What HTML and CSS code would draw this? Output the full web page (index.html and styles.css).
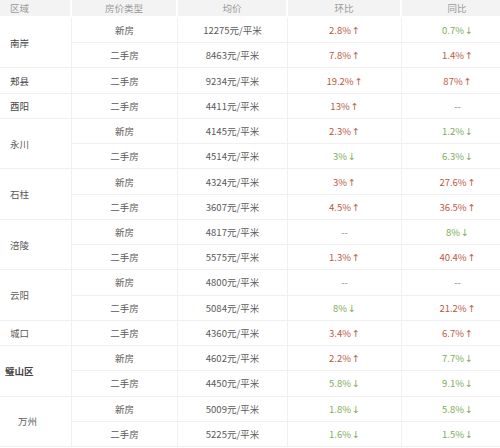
FILE: index.html
```html
<!DOCTYPE html>
<html lang="zh">
<head>
<meta charset="utf-8">
<link rel="stylesheet" href="styles.css">
</head>
<body>
<div class="wrap">
<table class="t">
<colgroup><col class="c1"><col class="c2"><col class="c3"><col class="c4"><col class="c5"></colgroup>
<thead>
<tr><th class="area">区域</th><th>房价类型</th><th>均价</th><th>环比</th><th>同比</th></tr>
</thead>
<tbody>
<tr><td rowspan="2" class="area b">南岸</td><td>新房</td><td>12275元/平米</td><td class="up">2.8%<span class="ar">↑</span></td><td class="dn">0.7%<span class="ar">↓</span></td></tr>
<tr><td>二手房</td><td>8463元/平米</td><td class="up">7.8%<span class="ar">↑</span></td><td class="up">1.4%<span class="ar">↑</span></td></tr>
<tr><td class="area b">郏县</td><td>二手房</td><td>9234元/平米</td><td class="up">19.2%<span class="ar">↑</span></td><td class="up">87%<span class="ar">↑</span></td></tr>
<tr><td class="area b">酉阳</td><td>二手房</td><td>4411元/平米</td><td class="up">13%<span class="ar">↑</span></td><td class="na">--</td></tr>
<tr><td rowspan="2" class="area">永川</td><td>新房</td><td>4145元/平米</td><td class="up">2.3%<span class="ar">↑</span></td><td class="dn">1.2%<span class="ar">↓</span></td></tr>
<tr><td>二手房</td><td>4514元/平米</td><td class="dn">3%<span class="ar">↓</span></td><td class="dn">6.3%<span class="ar">↓</span></td></tr>
<tr><td rowspan="2" class="area">石柱</td><td>新房</td><td>4324元/平米</td><td class="up">3%<span class="ar">↑</span></td><td class="up">27.6%<span class="ar">↑</span></td></tr>
<tr><td>二手房</td><td>3607元/平米</td><td class="up">4.5%<span class="ar">↑</span></td><td class="up">36.5%<span class="ar">↑</span></td></tr>
<tr><td rowspan="2" class="area">涪陵</td><td>新房</td><td>4817元/平米</td><td class="na">--</td><td class="dn">8%<span class="ar">↓</span></td></tr>
<tr><td>二手房</td><td>5575元/平米</td><td class="up">1.3%<span class="ar">↑</span></td><td class="up">40.4%<span class="ar">↑</span></td></tr>
<tr><td rowspan="2" class="area">云阳</td><td>新房</td><td>4800元/平米</td><td class="na">--</td><td class="na">--</td></tr>
<tr><td>二手房</td><td>5084元/平米</td><td class="dn">8%<span class="ar">↓</span></td><td class="up">21.2%<span class="ar">↑</span></td></tr>
<tr><td class="area">城口</td><td>二手房</td><td>4360元/平米</td><td class="up">3.4%<span class="ar">↑</span></td><td class="up">6.7%<span class="ar">↑</span></td></tr>
<tr><td rowspan="2" class="area b tight">璧山区</td><td>新房</td><td>4602元/平米</td><td class="up">2.2%<span class="ar">↑</span></td><td class="dn">7.7%<span class="ar">↓</span></td></tr>
<tr><td>二手房</td><td>4450元/平米</td><td class="dn">5.8%<span class="ar">↓</span></td><td class="dn">9.1%<span class="ar">↓</span></td></tr>
<tr><td rowspan="2" class="area wide">万州</td><td>新房</td><td>5009元/平米</td><td class="dn">1.8%<span class="ar">↓</span></td><td class="dn">5.8%<span class="ar">↓</span></td></tr>
<tr><td>二手房</td><td>5225元/平米</td><td class="dn">1.6%<span class="ar">↓</span></td><td class="dn">1.5%<span class="ar">↓</span></td></tr>
</tbody>
</table>
</div>
</body>
</html>
```
FILE: styles.css
```css
html, body {
  margin: 0;
  padding: 0;
  background: #fff;
}
.wrap {
  width: 500px;
  height: 448px;
  overflow: hidden;
}
.t {
  width: 514px;
  table-layout: fixed;
  border-collapse: separate;
  border-spacing: 0;
  font-family: "Noto Sans CJK SC", "Microsoft YaHei", sans-serif;
  font-size: 9.5px;
  color: #5a5a5a;
}
.c1 { width: 72px; }
.c2 { width: 106px; }
.c3 { width: 110px; }
.c4 { width: 114px; }
.c5 { width: 112px; }
.t th {
  height: 16px;
  padding: 0;
  background: #f3f3f3;
  color: #9a9a9a;
  font-weight: normal;
  text-align: center;
  border-right: 2px solid #fff;
  border-bottom: 2px solid #fff;
}
.t tbody tr {
  height: 25.24px;
}
.t td {
  padding: 0;
  text-align: center;
  border-bottom: 1px solid #f0f0f0;
  border-right: 1px solid #f0f0f0;
}
.t .area {
  text-align: left;
  padding-left: 10px;
}
.t .area.b {
  color: #444;
}
.t .area.tight {
  padding-left: 5px;
  font-weight: bold;
}
.t .area.wide {
  padding-left: 18px;
}
.up { color: #b95a44; }
.dn { color: #80ad58; }
.na { color: #8a8a8a; }
.ar {
  font-family: "DejaVu Sans", sans-serif;
  font-size: 9.5px;
  margin-left: 1px;
}
```
